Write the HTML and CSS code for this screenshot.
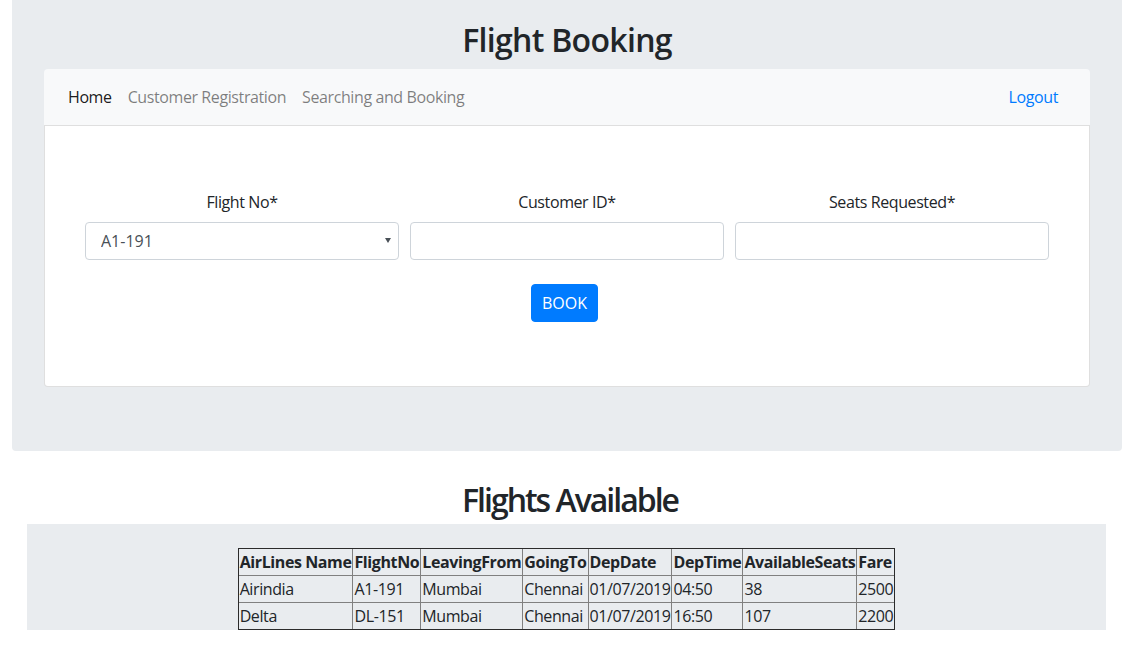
FILE: index.html
```html
<!DOCTYPE html>
<html lang="en">
<head>
<meta charset="utf-8">
<title>Flight Booking</title>
<link rel="stylesheet" href="styles.css">
</head>
<body>
<div class="jumbotron">
  <h2 class="title">Flight Booking</h2>
  <nav class="navbar">
    <ul class="nav-list">
      <li><a class="nav-link active" href="#">Home</a></li>
      <li><a class="nav-link" href="#">Customer Registration</a></li>
      <li><a class="nav-link" href="#">Searching and Booking</a></li>
    </ul>
    <a class="nav-link logout" href="#">Logout</a>
  </nav>
  <div class="card">
    <form class="booking-form">
      <div class="form-row">
        <div class="field">
          <label class="field-label">Flight No*</label>
          <div class="select-wrap">
            <select class="control select"><option>A1-191</option><option>DL-151</option></select>
          </div>
        </div>
        <div class="field">
          <label class="field-label">Customer ID*</label>
          <input class="control" type="text">
        </div>
        <div class="field">
          <label class="field-label">Seats Requested*</label>
          <input class="control" type="text">
        </div>
      </div>
      <div class="actions">
        <button class="btn" type="button">BOOK</button>
      </div>
    </form>
  </div>
</div>
<h2 class="subtitle">Flights Available</h2>
<div class="flights">
  <table class="flight-table">
    <tr><th>AirLines Name</th><th>FlightNo</th><th>LeavingFrom</th><th>GoingTo</th><th>DepDate</th><th>DepTime</th><th>AvailableSeats</th><th>Fare</th></tr>
    <tr><td>Airindia</td><td>A1-191</td><td>Mumbai</td><td>Chennai</td><td>01/07/2019</td><td>04:50</td><td>38</td><td>2500</td></tr>
    <tr><td>Delta</td><td>DL-151</td><td>Mumbai</td><td>Chennai</td><td>01/07/2019</td><td>16:50</td><td>107</td><td>2200</td></tr>
  </table>
</div>
</body>
</html>
```

FILE: styles.css
```css
* { box-sizing: border-box; }
html, body { margin: 0; padding: 0; }
body {
  font-family: "Open Sans", "Noto Sans", sans-serif;
  font-size: 16px;
  line-height: 1.5;
  letter-spacing: -0.4px;
  color: #212529;
  background: #fff;
}
.jumbotron {
  margin: 0 0 30px 12px;
  width: 1110px;
  background: #e9ecef;
  padding: 21px 32px 64px;
  border-radius: 0 0 4px 4px;
}
.title, .subtitle {
  margin: 0;
  font-size: 32px;
  font-weight: 600;
  line-height: 1.2;
  text-align: center;
}
.title { letter-spacing: -0.7px; margin-bottom: 10px; }
.subtitle { letter-spacing: -2px; margin-bottom: 4px; }
.navbar {
  display: flex;
  align-items: center;
  justify-content: space-between;
  background: #f8f9fa;
  padding: 8px 16px;
  border-radius: 4px 4px 0 0;
}
.nav-list {
  display: flex;
  list-style: none;
  margin: 0;
  padding: 0;
}
.nav-link {
  display: block;
  padding: 8px;
  color: rgba(0,0,0,.5);
  text-decoration: none;
}
.nav-link.active { color: rgba(0,0,0,.9); }
.logout { color: #007bff; margin-right: 8px; }
.card {
  background: #fff;
  border: 1px solid rgba(0,0,0,.125);
  border-radius: 0 0 4px 4px;
  padding: 64px 40px;
}
.form-row {
  display: grid;
  grid-template-columns: repeat(3, 1fr);
  column-gap: 11px;
}
.field {
  display: flex;
  flex-direction: column;
  align-items: stretch;
}
.field-label {
  text-align: center;
  margin-bottom: 8px;
}
.control {
  display: block;
  width: 100%;
  height: 38px;
  padding: 6px 15px;
  font: inherit;
  color: #495057;
  background: #fff;
  border: 1px solid #ced4da;
  border-radius: 4px;
}
.select-wrap { position: relative; }
.select {
  appearance: none;
  -webkit-appearance: none;
}
.select-wrap::after {
  content: "";
  position: absolute;
  right: 8px;
  top: 16px;
  border-left: 3px solid transparent;
  border-right: 3px solid transparent;
  border-top: 5px solid #495057;
  pointer-events: none;
}
.actions {
  display: flex;
  justify-content: center;
  margin-top: 24px;
  padding-right: 5px;
}
.btn {
  font: inherit;
  color: #fff;
  background: #007bff;
  border: 1px solid #007bff;
  border-radius: 4px;
  padding: 6px 10px;
  height: 38px;
}
.flights {
  margin: 0 34px 0 27px;
  background: #e9ecef;
  padding-top: 24px;
  height: 106px;
  display: flex;
  justify-content: center;
  align-items: flex-start;
}
.flight-table {
  border-collapse: separate;
  border-spacing: 0;
  border: 1px solid #2b2b2b;
}
.flight-table th, .flight-table td {
  padding: 1px;
  text-align: left;
  white-space: nowrap;
  border-right: 1px solid #808080;
  border-bottom: 1px solid #808080;
  line-height: 24px;
}
.flight-table th { font-weight: 700; }
.flight-table tr > :last-child { border-right: 0; }
.flight-table tr:last-child > * { border-bottom: 0; }
```
